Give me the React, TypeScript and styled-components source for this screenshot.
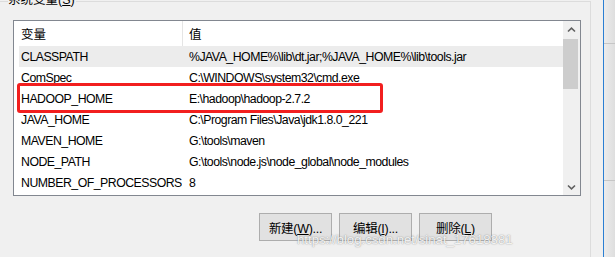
import type { FC } from 'react'
import styled, { createGlobalStyle } from 'styled-components'

const GlobalStyle = createGlobalStyle`
  html,
  body {
    margin: 0;
    padding: 0;
    background-color: #f0f0f0;
    overflow: hidden;
  }

  body {
    font-family: 'Liberation Sans', 'Noto Sans CJK SC', sans-serif;
    font-size: 12px;
    color: #000;
  }
`

const Screen = styled.div`
  display: flex;
  width: 615px;
  height: 257px;
  overflow: hidden;
`

const DialogPane = styled.div`
  position: relative;
  width: 603px;
  flex-shrink: 0;
  overflow: hidden;
  background-color: #f0f0f0;
`

const BehindWindow = styled.div`
  display: flex;
  flex: 1;
  flex-direction: column;
  border-left: 1px solid #2b7fd3;
  background: linear-gradient(to right, #ececec, #dedede);
`

const BehindBand = styled.div<{ $height?: number }>`
  height: ${({ $height }) => ($height ? `${$height}px` : 'auto')};
  flex: ${({ $height }) => ($height ? 'none' : '1')};
  border-bottom: ${({ $height }) => ($height ? '1px solid #c6c6c6' : 'none')};
`

const GroupBox = styled.div`
  position: relative;
  box-sizing: border-box;
  width: 593px;
  height: 300px;
  margin: 1px 0 0 -2px;
  padding: 18px 10px 0 14px;
  border: 1px solid #dcdcdc;
`

const GroupTitle = styled.div`
  position: absolute;
  top: -9px;
  left: 9px;
  padding-right: 1px;
  background-color: #f0f0f0;
  font-size: 12.5px;
  line-height: 14px;
  white-space: nowrap;
`

const AccessKey = styled.span`
  text-decoration: underline;
  text-underline-offset: 1px;
`

const ListBox = styled.div`
  position: relative;
  box-sizing: border-box;
  display: flex;
  width: 568px;
  height: 176px;
  border: 1px solid #828790;
  background-color: #fff;
`

const ListMain = styled.div`
  display: flex;
  flex: 1;
  flex-direction: column;
  min-width: 0;
`

const HeaderRow = styled.div`
  display: grid;
  grid-template-columns: 168px 1fr;
  height: 25px;
  align-items: stretch;
  font-size: 12.5px;
`

const HeaderCell = styled.div<{ $divider?: boolean }>`
  display: flex;
  align-items: center;
  padding-left: ${({ $divider }) => ($divider ? '6px' : '7px')};
  border-left: ${({ $divider }) => ($divider ? '1px solid #e5e5e5' : 'none')};
`

const Rows = styled.div`
  display: flex;
  flex-direction: column;
  padding-left: 5px;
`

const Row = styled.div<{ $selected?: boolean }>`
  display: grid;
  grid-template-columns: 163px 1fr;
  height: 21px;
  align-items: center;
  background-color: ${({ $selected }) => ($selected ? '#ececec' : 'transparent')};
  font-size: 12.3px;
  letter-spacing: -0.5px;
  white-space: nowrap;
`

const Cell = styled.div<{ $value?: boolean }>`
  padding-left: ${({ $value }) => ($value ? '7px' : '2px')};
  overflow: hidden;
`

const ScrollBar = styled.div`
  display: flex;
  flex-direction: column;
  width: 17px;
  flex-shrink: 0;
  background-color: #f0f0f0;
`

const ScrollButton = styled.div`
  display: flex;
  align-items: center;
  justify-content: center;
  height: 17px;
`

const ScrollTrack = styled.div`
  flex: 1;
  padding: 1px 1px 0 0;
`

const ScrollThumb = styled.div`
  width: 15px;
  height: 50px;
  background-color: #cdcdcd;
`

const Highlight = styled.div`
  position: absolute;
  top: 62px;
  left: 3px;
  box-sizing: border-box;
  width: 366px;
  height: 30px;
  border: 3px solid #f21f1f;
  border-radius: 3px;
  pointer-events: none;
`

const ButtonRow = styled.div`
  display: flex;
  justify-content: flex-end;
  gap: 7px;
  width: 568px;
  box-sizing: border-box;
  margin-top: 17px;
  padding-right: 89px;
`

const Button = styled.button`
  box-sizing: border-box;
  width: 73px;
  height: 28px;
  padding: 0;
  border: 1px solid #adadad;
  background-color: #e1e1e1;
  color: #000;
  font-family: 'Liberation Sans', 'Noto Sans CJK SC', sans-serif;
  font-size: 12.5px;
  letter-spacing: -0.3px;
`

const Watermark = styled.div`
  position: absolute;
  top: 231px;
  left: 297px;
  font-family: 'Liberation Sans', sans-serif;
  font-size: 13.2px;
  line-height: 18px;
  color: rgba(255, 255, 255, 0.9);
  text-shadow:
    0 0 1px rgba(90, 90, 90, 0.6),
    0 0 2px rgba(120, 120, 120, 0.35);
  white-space: nowrap;
  pointer-events: none;
`

const Chevron: FC<{ down?: boolean }> = ({ down }) => (
  <svg width="9" height="6" viewBox="0 0 9 6">
    <path
      d={down ? 'M1 1.5 L4.5 4.8 L8 1.5' : 'M1 4.5 L4.5 1.2 L8 4.5'}
      fill="none"
      stroke="#606060"
      strokeWidth="1.6"
    />
  </svg>
)

const variables = [
  { name: 'CLASSPATH', value: '%JAVA_HOME%\\lib\\dt.jar;%JAVA_HOME%\\lib\\tools.jar' },
  { name: 'ComSpec', value: 'C:\\WINDOWS\\system32\\cmd.exe' },
  { name: 'HADOOP_HOME', value: 'E:\\hadoop\\hadoop-2.7.2' },
  { name: 'JAVA_HOME', value: 'C:\\Program Files\\Java\\jdk1.8.0_221' },
  { name: 'MAVEN_HOME', value: 'G:\\tools\\maven' },
  { name: 'NODE_PATH', value: 'G:\\tools\\node.js\\node_global\\node_modules' },
  { name: 'NUMBER_OF_PROCESSORS', value: '8' },
]

const App: FC = () => {
  return (
    <>
      <GlobalStyle />
      <Screen>
        <DialogPane>
          <GroupBox>
            <GroupTitle>
              系统变量(<AccessKey>S</AccessKey>)
            </GroupTitle>
            <ListBox>
              <ListMain>
                <HeaderRow>
                  <HeaderCell>变量</HeaderCell>
                  <HeaderCell $divider>值</HeaderCell>
                </HeaderRow>
                <Rows>
                  {variables.map((item, index) => (
                    <Row key={item.name} $selected={index === 0}>
                      <Cell>{item.name}</Cell>
                      <Cell $value>{item.value}</Cell>
                    </Row>
                  ))}
                </Rows>
              </ListMain>
              <ScrollBar>
                <ScrollButton>
                  <Chevron />
                </ScrollButton>
                <ScrollTrack>
                  <ScrollThumb />
                </ScrollTrack>
                <ScrollButton>
                  <Chevron down />
                </ScrollButton>
              </ScrollBar>
              <Highlight />
            </ListBox>
            <ButtonRow>
              <Button>
                新建(<AccessKey>W</AccessKey>)...
              </Button>
              <Button>
                编辑(<AccessKey>I</AccessKey>)...
              </Button>
              <Button>
                删除(<AccessKey>L</AccessKey>)
              </Button>
            </ButtonRow>
          </GroupBox>
          <Watermark>https://blog.csdn.net/sinat_17618381</Watermark>
        </DialogPane>
        <BehindWindow>
          <BehindBand $height={43} />
          <BehindBand $height={136} />
          <BehindBand />
        </BehindWindow>
      </Screen>
    </>
  )
}

export default App
